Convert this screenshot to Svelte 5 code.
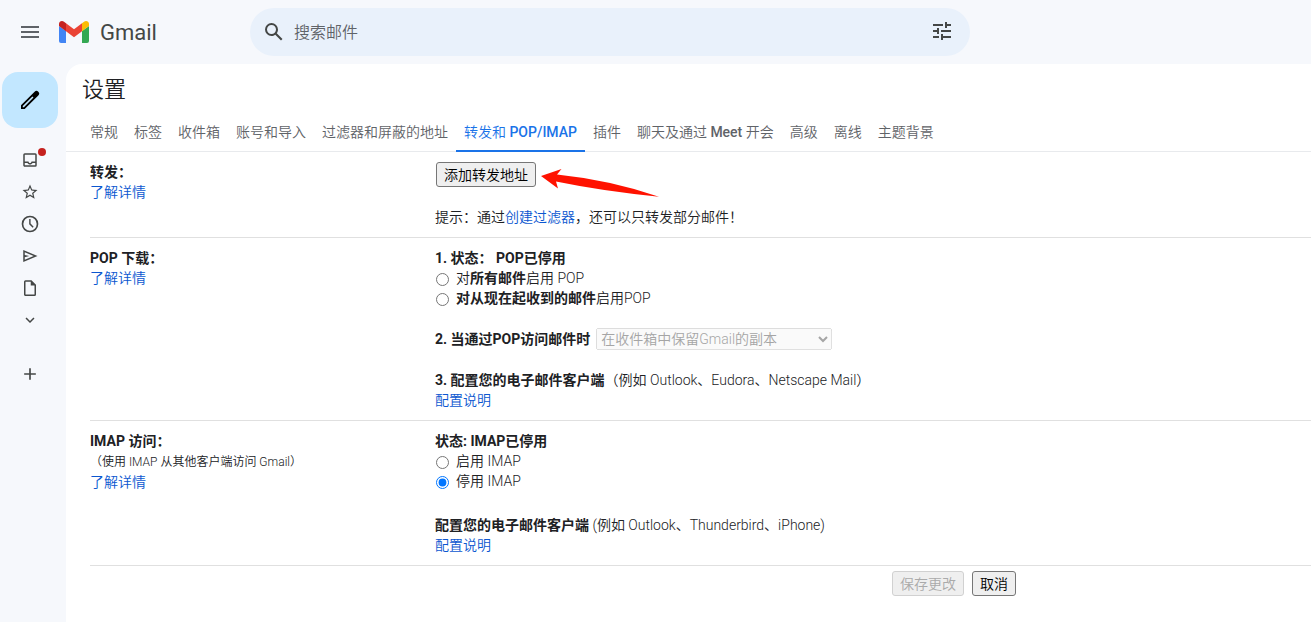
<script>
  const tabs = ['常规', '标签', '收件箱', '账号和导入', '过滤器和屏蔽的地址', '转发和 POP/IMAP', '插件', '聊天及通过 Meet 开会', '高级', '离线', '主题背景'];
  const activeTab = '转发和 POP/IMAP';

  // Latin words in a tab label are set heavier than the Chinese around them.
  const parts = (label) => label.split(/([A-Za-z/]+)/).filter(Boolean);
  const isLatin = (part) => /[A-Za-z]/.test(part);

  const folders = [
    { name: '收件箱', size: 18, unread: true, d: 'M19 3H5a2 2 0 0 0-2 2v14c0 1.100.9 2 2 2h14a2 2 0 0 0 2-2V5a2 2 0 0 0-2-2zm0 16H5v-3h3.560c.69 1.190 1.970 2 3.450 2s2.750-.81 3.450-2H19v3zm0-5h-4.990c0 1.100-.9 2-2 2s-2-.9-2-2H5V5h14v9z' },
    { name: '已加星标', size: 18, d: 'M22 9.240l-7.190-.62L12 2 9.190 8.630 2 9.240l5.460 4.730L5.820 21 12 17.270 18.180 21l-1.630-7.030L22 9.240zM12 15.400l-3.760 2.270 1-4.280-3.320-2.880 4.380-.38L12 6.100l1.710 4.040 4.380.38-3.320 2.880 1 4.280L12 15.400z' },
    { name: '已延后', size: 20, d: 'M12 2a10 10 0 1 0 0 20 10 10 0 0 0 0-20zm0 18a8 8 0 1 1 0-16 8 8 0 0 1 0 16zM12.700 6H11v6.300l4.200 4.200 1.200-1.300-3.700-3.700z' },
    { name: '已发送', size: 18, d: 'M3 4v16l19-8L3 4zm2 3l11.850 5L5 17v-3.500l6-1.500-6-1.500V7z' },
    { name: '草稿', size: 18, d: 'M14 1.500H6a2 2 0 0 0-2 2v17c0 1.100.9 2 2 2h12a2 2 0 0 0 2-2v-13l-6-6zM6 20.500v-17h7v5h5v12H6z' },
    { name: '展开', size: 18, d: 'M7.410 8.590 12 13.170l4.590-4.580L18 10l-6 6-6-6z' }
  ];

  let imap = $state('off');
</script>

<header>
  <button class="icon menu" aria-label="主菜单">
    <svg viewBox="0 0 24 24" width="24" height="24"><path d="M3 18h18v-2H3v2zm0-5h18v-2H3v2zm0-7v2h18V6H3z" /></svg>
  </button>
  <a class="brand" href="#inbox">
    <svg viewBox="0 0 30 22" width="30" height="22">
      <path fill="#4285f4" d="M2 22h5V10L0 5v15a2 2 0 0 0 2 2z" />
      <path fill="#34a853" d="M23 22h5a2 2 0 0 0 2-2V5l-7 5z" />
      <path fill="#fbbc04" d="M23 2.200v8l7-5.200V3c0-2.700-3-3.800-5-2.300z" />
      <path fill="#ea4335" d="M7 10.200v-8l8 6 8-6v8l-8 6z" />
      <path fill="#c5221f" d="M0 3v2l7 5.200v-8L5 .7C3-.8 0 .3 0 3z" />
    </svg>
    <span>Gmail</span>
  </a>
  <form class="search">
    <button class="icon" type="button" aria-label="搜索">
      <svg viewBox="0 0 24 24" width="24" height="24"><path d="M20.490 19l-5.730-5.730C15.530 12.200 16 10.910 16 9.500A6.500 6.500 0 1 0 9.500 16c1.410 0 2.700-.47 3.770-1.240L19 20.490 20.490 19zM5 9.500C5 7.010 7.010 5 9.500 5S14 7.010 14 9.500 11.990 14 9.500 14 5 11.990 5 9.500z" /></svg>
    </button>
    <input type="text" placeholder="搜索邮件" aria-label="搜索邮件" />
    <button class="icon tune" type="button" aria-label="高级搜索选项">
      <svg viewBox="0 0 24 24" width="24" height="24"><path d="M3 17v2h6v-2H3zM3 5v2h10V5H3zm10 16v-2h8v-2h-8v-2h-2v6h2zM7 9v2H3v2h4v2h2V9H7zm14 4v-2H11v2h10zm-6-4h2V7h4V5h-4V3h-2v6z" /></svg>
    </button>
  </form>
</header>

<div class="body">
  <nav class="rail">
    <button class="compose" aria-label="写邮件">
      <svg viewBox="0 0 24 24" width="24" height="24"><path fill-rule="evenodd" d="M20.300 3.700a2.600 2.600 0 0 0-3.700 0L3 17.300V21h3.700L20.300 7.400a2.600 2.600 0 0 0 0-3.700zM5.900 19.200H4.800v-1.100L14.400 8.500l1.100 1.100z" /></svg>
    </button>
    <ul>
      {#each folders as f}
        <li>
          <a href="#folder" aria-label={f.name}>
            <svg viewBox="0 0 24 24" width={f.size} height={f.size}><path d={f.d} /></svg>
            {#if f.unread}<i class="dot"></i>{/if}
          </a>
        </li>
      {/each}
    </ul>
    <button class="icon add" aria-label="创建新标签">
      <svg viewBox="0 0 24 24" width="20" height="20"><path d="M19 13h-6v6h-2v-6H5v-2h6V5h2v6h6z" /></svg>
    </button>
  </nav>

  <main>
    <h1>设置</h1>
    <nav class="tabs">
      {#each tabs as t}
        <a href="#settings" class:active={t === activeTab}>{#each parts(t) as part}{#if isLatin(part)}<span class="latin">{part}</span>{:else}{part}{/if}{/each}</a>
      {/each}
    </nav>

    <section>
      <div>
        <b>转发：</b><br />
        <a href="#help">了解详情</a>
      </div>
      <div>
        <div class="forward">
          <button class="push">添加转发地址</button>
          <svg class="arrow" viewBox="0 0 120 30" width="120" height="30"><path fill="#ff1200" d="M1 11 21.500 4 17 9.500Q70 15 119 31.700Q62 26 16 16.500L18 23.500Z" /></svg>
        </div>
        <p class="gap">提示：通过<a href="#filters">创建过滤器</a>，还可以只转发部分邮件！</p>
      </div>
    </section>

    <section>
      <div>
        <b>POP 下载：</b><br />
        <a href="#help">了解详情</a>
      </div>
      <div>
        <p><b>1. 状态： POP已停用</b></p>
        <label><input type="radio" name="pop" /><span>对<b>所有邮件</b>启用 POP</span></label>
        <label><input type="radio" name="pop" /><span><b>对从现在起收到的邮件</b>启用POP</span></label>
        <div class="choice gap">
          <label for="pop-action"><b>2. 当通过POP访问邮件时</b></label>
          <select id="pop-action" disabled><option>在收件箱中保留Gmail的副本</option></select>
        </div>
        <p class="gap"><b>3. 配置您的电子邮件客户端</b>（例如 Outlook、Eudora、Netscape Mail）</p>
        <a href="#help">配置说明</a>
      </div>
    </section>

    <section>
      <div>
        <b>IMAP 访问：</b><br />
        <small>（使用 IMAP 从其他客户端访问 Gmail）</small>
        <a href="#help">了解详情</a>
      </div>
      <div>
        <p><b>状态: IMAP已停用</b></p>
        <label><input type="radio" name="imap" value="on" bind:group={imap} /><span>启用 IMAP</span></label>
        <label><input type="radio" name="imap" value="off" bind:group={imap} /><span>停用 IMAP</span></label>
        <p class="gap wide"><b>配置您的电子邮件客户端</b> (例如 Outlook、Thunderbird、iPhone)</p>
        <a href="#help">配置说明</a>
      </div>
    </section>

    <footer>
      <button class="push" disabled>保存更改</button>
      <button class="push">取消</button>
    </footer>
  </main>
</div>

<style>
  :global(body) {
    background: #f6f8fc;
  }
  :global(#app) {
    display: flex;
    flex-direction: column;
    min-height: 100vh;
    color: #202124;
    font: 350 14px/20px Roboto, 'Noto Sans CJK SC', sans-serif;
  }
  button,
  input,
  select {
    font-family: inherit;
    font-weight: inherit;
  }
  b {
    font-weight: 700;
  }
  svg {
    display: block;
    fill: #444746;
  }
  a {
    color: #0b57d0;
    text-decoration: none;
  }
  p,
  ul,
  h1 {
    margin: 0;
    padding: 0;
  }
  .icon {
    display: flex;
    padding: 0;
    border: 0;
    background: none;
  }
  header {
    display: flex;
    align-items: center;
    height: 64px;
  }
  .menu {
    margin-left: 18px;
  }
  .menu svg {
    fill: #5f6368;
  }
  .brand {
    display: flex;
    align-items: center;
    gap: 11px;
    width: 191px;
    padding-left: 17px;
    flex: none;
    box-sizing: border-box;
    color: #444746;
    font-size: 22px;
    font-weight: 400;
    line-height: 28px;
  }
  .brand span {
    padding-top: 2px;
  }
  .search {
    display: flex;
    align-items: center;
    flex: 0 1 720px;
    height: 48px;
    margin-left: 17px;
    padding: 0 16px 0 12px;
    box-sizing: border-box;
    border-radius: 24px;
    background: #e9f1fb;
  }
  .search input {
    flex: 1;
    min-width: 0;
    padding: 0 8px;
    border: 0;
    outline: 0;
    background: none;
    font-size: 16px;
  }
  .search input::placeholder {
    color: #5f6368;
  }
  .tune {
    padding-bottom: 2px;
  }
  .body {
    display: flex;
    flex: 1;
  }
  .rail {
    flex: none;
    width: 66px;
    box-sizing: border-box;
    padding: 8px 6px 0 2px;
  }
  .compose {
    display: grid;
    place-items: center;
    width: 56px;
    height: 56px;
    padding: 0;
    border: 0;
    border-radius: 16px;
    background: #c2e7ff;
  }
  .compose svg {
    fill: #000;
  }
  .rail ul {
    margin-top: 16px;
    list-style: none;
  }
  .rail li a {
    position: relative;
    display: grid;
    place-items: center;
    width: 56px;
    height: 32px;
  }
  .dot {
    position: absolute;
    top: 4px;
    left: 36px;
    width: 8px;
    height: 8px;
    border-radius: 50%;
    background: #c5221f;
  }
  .add {
    margin: 28px 18px;
  }
  main {
    flex: 1;
    min-width: 0;
    border-radius: 16px 0 0 0;
    background: #fff;
  }
  h1 {
    padding: 12px 16px 8px;
    font-size: 22px;
    font-weight: 350;
    line-height: 28px;
  }
  .tabs {
    display: flex;
    height: 40px;
    padding-left: 16px;
    box-sizing: border-box;
    box-shadow: inset 0 -1px #e8eaed;
    white-space: nowrap;
  }
  .tabs a {
    padding: 10px 8px 8px;
    border-bottom: 2px solid transparent;
    color: #5f6368;
  }
  .latin {
    font-weight: 500;
  }
  .tabs .active {
    border-color: #1a73e8;
    color: #1a73e8;
  }
  section {
    display: grid;
    grid-template-columns: 345px 1fr;
    margin-left: 24px;
    padding: 10px 0;
    border-bottom: 1px solid #e0e0e0;
  }
  small {
    display: block;
    padding-top: 1px;
    font-size: 12px;
  }
  section div > label {
    display: flex;
    align-items: center;
  }
  input[type='radio'] {
    width: 13px;
    height: 13px;
    margin: 2px 7px 0 1px;
  }
  .gap {
    margin-top: 20px;
  }
  .wide {
    margin-top: 24px;
  }
  .forward {
    position: relative;
    width: 100px;
    margin-left: 1px;
  }
  .arrow {
    position: absolute;
    top: 3px;
    left: 104px;
    overflow: visible;
  }
  .choice {
    display: flex;
    align-items: center;
    gap: 6px;
  }
  select {
    width: 236px;
    height: 22px;
    font-size: 14px;
  }
  .push {
    display: block;
    height: 25px;
    padding: 0 7px;
    border: 1px solid #767676;
    border-radius: 3px;
    background: #efefef;
    color: #000;
    font-size: 14px;
    line-height: 20px;
    white-space: nowrap;
  }
  .push:disabled {
    border-color: #d1d1d1;
    color: #aaa;
  }
  footer {
    display: flex;
    justify-content: flex-end;
    gap: 8px;
    padding: 5px 295px 24px 24px;
  }
</style>
